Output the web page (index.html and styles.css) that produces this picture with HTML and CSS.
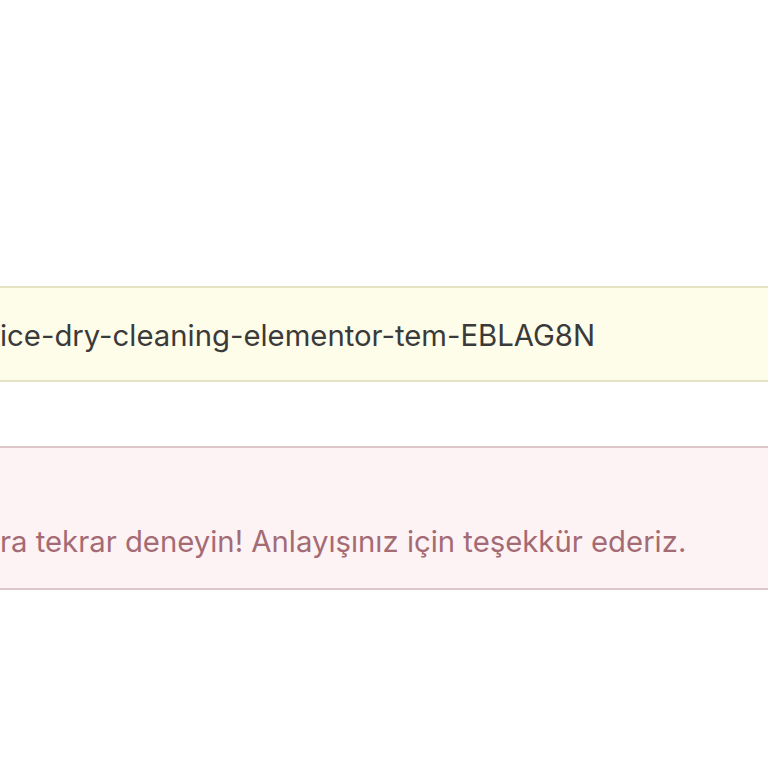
FILE: index.html
```html
<!DOCTYPE html>
<html lang="tr">
<head>
<meta charset="utf-8">
<link rel="stylesheet" href="styles.css">
</head>
<body>
<main class="page">
  <div class="notice notice-info"><p>ice-dry-cleaning-elementor-tem-EBLAG8N</p></div>
  <div class="notice notice-error"><p>ra tekrar deneyin! Anlayışınız için teşekkür ederiz.</p></div>
</main>
</body>
</html>
```
FILE: styles.css
```css
html, body { margin: 0; padding: 0; background: #ffffff; }
body { font-family: Inter, "Noto Sans", sans-serif; overflow: hidden; }
.page { padding-top: 286px; display: flex; flex-direction: column; gap: 64px; margin: 0 -20px; }
.notice { box-sizing: border-box; padding-left: 20px; }
.notice p { margin: 0; font-size: 29.3px; line-height: 34px; white-space: nowrap; }
.notice-info { background: #fefde9; border-top: 2px solid #e6e3c4; border-bottom: 2px solid #e6e3c4; height: 96px; display: flex; align-items: center; padding-top: 4px; }
.notice-info p { color: #3a3a3a; }
.notice-error { background: #fdf3f4; border-top: 2px solid #dcc6ca; border-bottom: 2px solid #dcc6ca; height: 144px; display: flex; align-items: center; padding-top: 48px; }
.notice-error p { color: #a46b74; }
```
